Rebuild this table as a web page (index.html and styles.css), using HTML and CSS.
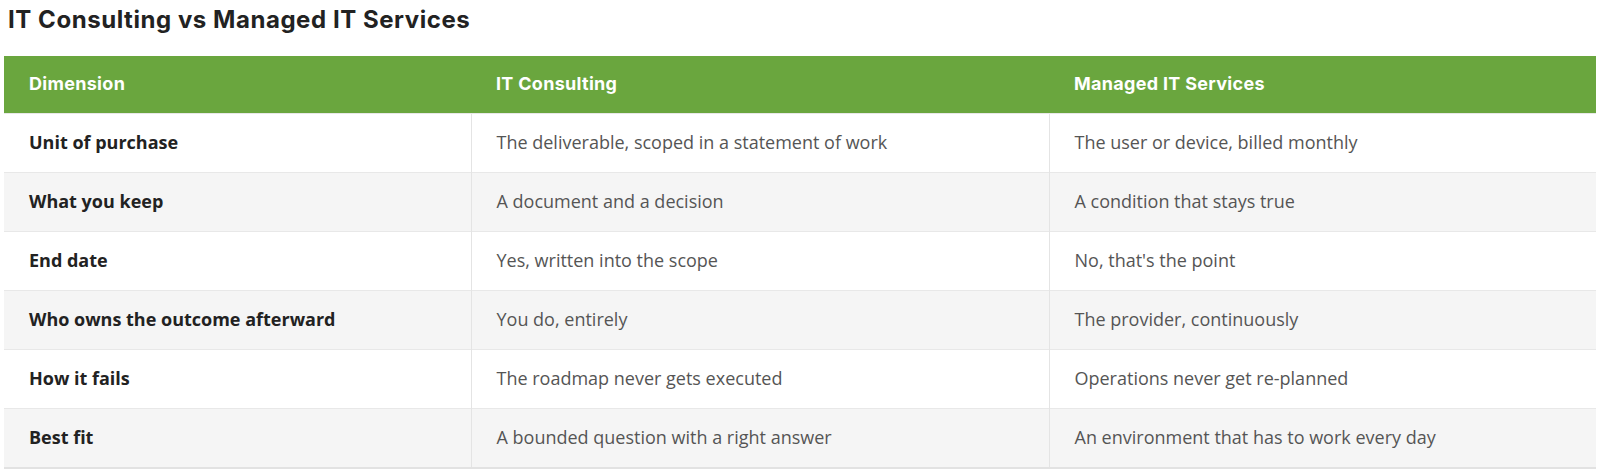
FILE: index.html
```html
<!DOCTYPE html>
<html lang="en">
<head>
<meta charset="utf-8">
<title>IT Consulting vs Managed IT Services</title>
<link rel="stylesheet" href="styles.css">
</head>
<body>
<h2 class="title">IT Consulting vs Managed IT Services</h2>
<table class="compare">
  <thead>
    <tr><th class="c1">Dimension</th><th class="c2">IT Consulting</th><th class="c3">Managed IT Services</th></tr>
  </thead>
  <tbody>
    <tr><td class="dim">Unit of purchase</td><td>The deliverable, scoped in a statement of work</td><td>The user or device, billed monthly</td></tr>
    <tr><td class="dim">What you keep</td><td>A document and a decision</td><td>A condition that stays true</td></tr>
    <tr><td class="dim">End date</td><td>Yes, written into the scope</td><td>No, that's the point</td></tr>
    <tr><td class="dim">Who owns the outcome afterward</td><td>You do, entirely</td><td>The provider, continuously</td></tr>
    <tr><td class="dim">How it fails</td><td>The roadmap never gets executed</td><td>Operations never get re-planned</td></tr>
    <tr><td class="dim">Best fit</td><td>A bounded question with a right answer</td><td>An environment that has to work every day</td></tr>
  </tbody>
</table>
</body>
</html>
```
FILE: styles.css
```css
html, body { margin: 0; padding: 0; background: #fff; }
body { padding: 0 4px; }
.title {
  font-family: "Inter", "Liberation Sans", sans-serif;
  font-weight: 700;
  font-size: 24px;
  letter-spacing: 0.55px;
  color: #222;
  margin: 0;
  padding: 5px 0 0 4px;
  height: 56px;
  box-sizing: border-box;
  line-height: 30px;
}
.compare {
  width: 1592px;
  table-layout: fixed;
  border-collapse: collapse;
  font-family: "Open Sans", "Liberation Sans", sans-serif;
  font-size: 18px;
  border-bottom: 2px solid #e2e2e2;
}
.compare th {
  background: #6aa63e;
  color: #fff;
  font-family: "Inter", "Liberation Sans", sans-serif;
  font-weight: 700;
  font-size: 18px;
  letter-spacing: 0.3px;
  text-align: left;
  height: 54px;
  padding: 0 25px 3px;
}
.c1 { width: 417px; }
.c2 { width: 528px; }
.compare td {
  height: 56px;
  padding: 0 25px 2px;
  color: #555;
  border-top: 1px solid #e8e8e8;
  border-left: 1px solid #e4e4e4;
}
.compare td.dim {
  font-weight: 700;
  color: #222;
  border-left: none;
}
.compare tbody tr:nth-child(even) td { background: #f5f5f5; }
```
